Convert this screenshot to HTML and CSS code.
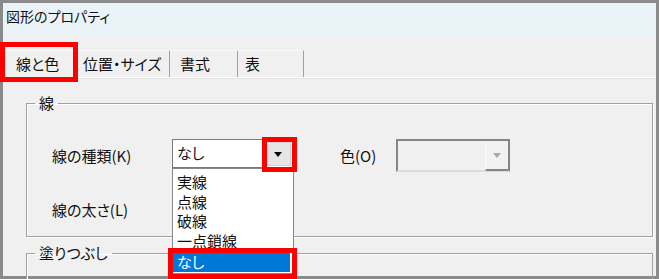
FILE: index.html
```html
<!DOCTYPE html>
<html lang="ja">
<head>
    <meta charset="UTF-8">
    <title>図形のプロパティ</title>
    <link rel="stylesheet" href="styles.css">
</head>
<body>
    <div class="window">
        <div class="titlebar">図形のプロパティ</div>
        <div class="tabs">
            <div class="tab tab1">線と色<span class="mark mark-tab"></span></div>
            <div class="tab tab2">位置・サイズ</div>
            <div class="tab tab3">書式</div>
            <div class="tab tab4">表</div>
        </div>
        <div class="panel">
            <fieldset class="group group-line">
                <legend>線</legend>
                <div class="row">
                    <div class="label">線の種類(K)</div>
                    <div class="combo">
                        <div class="combo-text">なし</div>
                        <div class="combo-btn"><span class="arrow"></span></div>
                        <span class="mark mark-btn"></span>
                        <ul class="list">
                            <li>実線</li>
                            <li>点線</li>
                            <li>破線</li>
                            <li>一点鎖線</li>
                            <li class="selected">なし</li>
                        </ul>
                        <span class="mark mark-item"></span>
                    </div>
                    <div class="label label-color">色(O)</div>
                    <div class="combo combo-disabled">
                        <div class="combo-text"></div>
                        <div class="combo-btn"><span class="arrow"></span></div>
                    </div>
                </div>
                <div class="row row2">
                    <div class="label">線の太さ(L)</div>
                </div>
            </fieldset>
            <fieldset class="group group-fill">
                <legend>塗りつぶし</legend>
            </fieldset>
        </div>
    </div>
</body>
</html>
```

FILE: styles.css
```css
*{
    box-sizing: border-box;
}
body{
    margin: 0;
    background-color: #f0f0f0;
    font-family: "Noto Sans CJK JP", "Noto Sans", sans-serif;
    font-feature-settings: "palt";
    color: #111;
    overflow: hidden;
}
.window{
    position: relative;
    width: 659px;
    height: 279px;
    border: 3px solid #8a8a8a;
    background-color: #f0f0f0;
}
.titlebar{
    height: 33px;
    background-color: #eaf4f8;
    font-size: 14px;
    line-height: 20px;
    padding: 3px 0 0 3px;
}
.tabs{
    display: flex;
    margin-top: 14px;
    height: 27px;
}
.tab{
    position: relative;
    height: 27px;
    font-size: 15px;
    line-height: 26px;
    border-top: 1px solid #fafafa;
    border-right: 1px solid #a0a0a0;
    white-space: nowrap;
}
.tab1{
    width: 74px;
    padding-left: 13px;
    border-right: none;
}
.tab2{
    width: 93px;
    padding-left: 6px;
}
.tab3{
    width: 68px;
    padding-left: 10px;
}
.tab4{
    width: 66px;
    padding-left: 7px;
}
.panel{
    border-top: 1px solid #fff;
    box-shadow: inset 0 1px 0 #e3e3e3;
    padding: 15px 3px 0 23px;
}
.group{
    margin: 0;
    min-width: 0;
    border: 1px solid #a0a0a0;
    box-shadow: inset 1px 1px 0 #fff, 1px 1px 0 #fff;
    padding: 26px 0 0 8px;
}
.group legend{
    padding: 0 4px;
    font-size: 15px;
    line-height: 20px;
}
.group-line{
    height: 144px;
}
.group-fill{
    margin-top: 6px;
    height: 33px;
    border-bottom: none;
    box-shadow: inset 1px 1px 0 #fff;
}
.row{
    display: flex;
    align-items: flex-start;
    padding-left: 17px;
}
.row2{
    margin-top: 21px;
}
.label{
    width: 120px;
    font-size: 15px;
    line-height: 20px;
    padding-top: 7px;
    white-space: nowrap;
}
.label-color{
    width: 56px;
    margin-left: 45px;
}
.combo{
    position: relative;
    display: flex;
    width: 123px;
    height: 29px;
    border: 1px solid #7a7a7a;
    background-color: #fff;
}
.combo-text{
    flex: 1;
    font-size: 15px;
    line-height: 26px;
    padding-left: 4px;
}
.combo-btn{
    display: flex;
    align-items: center;
    justify-content: center;
    width: 27px;
    height: 24px;
    margin: 2px 3px 0 0;
    background-color: #e6e6e6;
    border: 1px solid #d2d2d2;
}
.arrow{
    width: 0;
    height: 0;
    border-left: 4px solid transparent;
    border-right: 4px solid transparent;
    border-top: 5px solid #000;
}
.combo-disabled{
    width: 114px;
    height: 33px;
    border: 2px solid #858585;
    border-bottom-color: #dcdcdc;
    background-color: #f0f0f0;
}
.combo-disabled .combo-btn{
    width: 23px;
    height: 29px;
    margin: 1px 0 0 0;
    background-color: #f2f2f2;
    border: none;
    border-left: 1px solid #fafafa;
    border-bottom: 2px solid #858585;
}
.combo-disabled .arrow{
    border-top-color: #a8a8a8;
}
.list{
    position: absolute;
    top: 28px;
    left: -1px;
    width: 122px;
    height: 106px;
    margin: 0;
    padding: 3px 0 0 0;
    list-style: none;
    background-color: #fff;
    border: 1px solid #828790;
}
.list li{
    height: 19.5px;
    font-size: 15px;
    line-height: 19.5px;
    padding-left: 4px;
    margin-right: 3px;
}
.list li.selected{
    height: 20px;
    margin-top: 2px;
    background-color: #0078d7;
    color: #fff;
}
.mark{
    position: absolute;
    border: 5px solid #ff0000;
    z-index: 2;
}
.mark-tab{
    left: -3px;
    top: -9px;
    width: 78px;
    height: 40px;
}
.mark-btn{
    left: 89px;
    top: -3px;
    width: 35px;
    height: 35px;
}
.mark-item{
    left: -5px;
    top: 108px;
    width: 129px;
    height: 31px;
}
```
